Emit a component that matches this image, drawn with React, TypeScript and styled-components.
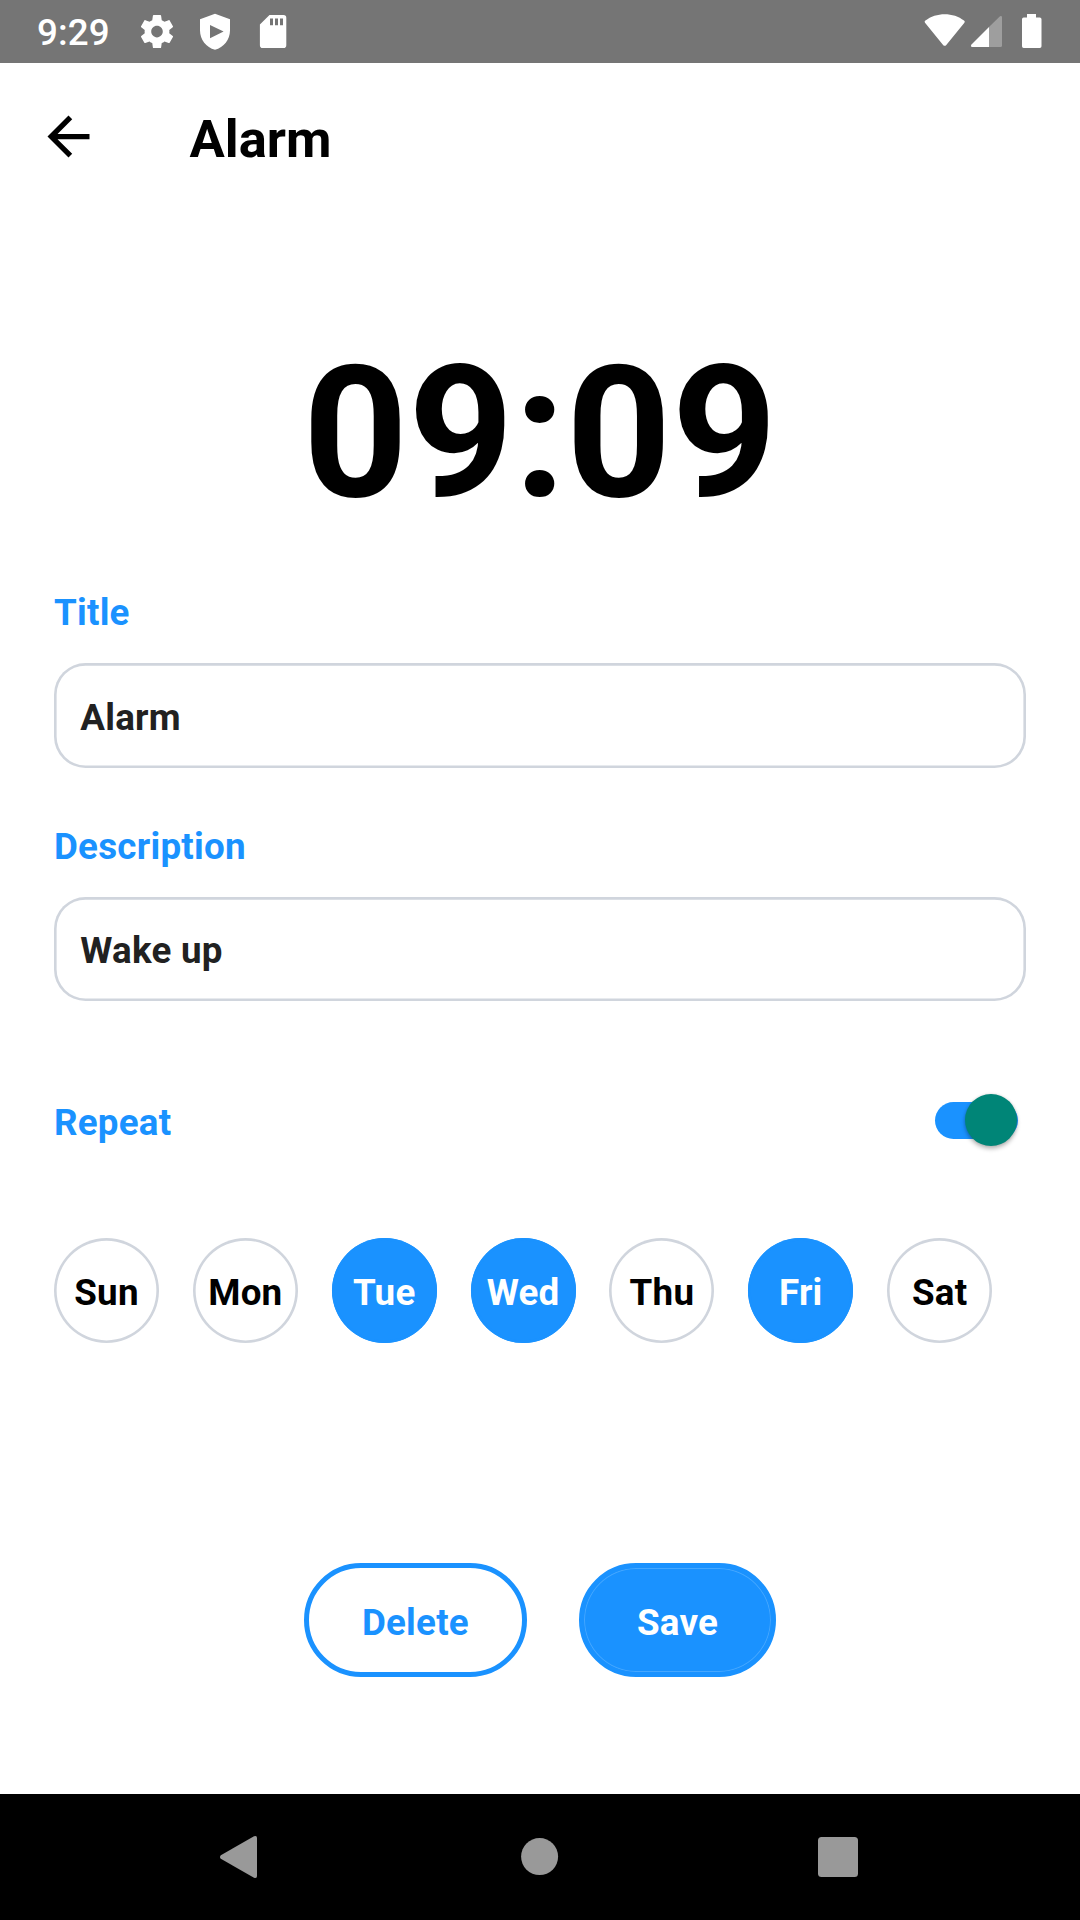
import React, { useState } from "react";
import styled, { createGlobalStyle } from "styled-components";

const BLUE = "#1a92ff";
const OUTLINE = "#d0d5dd";

const GlobalStyle = createGlobalStyle`
  *, *::before, *::after { box-sizing: border-box; }
  body { margin: 0; background: #fff; }
  button, input { font: inherit; letter-spacing: inherit; margin: 0; padding: 0; }
`;

const Screen = styled.div`
  width: 1080px;
  height: 1920px;
  display: flex;
  flex-direction: column;
  background: #fff;
  color: #000;
  overflow: hidden;
  font-family: Roboto, "Liberation Sans", sans-serif;
  font-size: 36.75px;
  font-weight: 700;
  line-height: 43px;
  letter-spacing: 0.24px;
`;

const StatusBar = styled.header`
  flex: none;
  height: 63px;
  display: flex;
  justify-content: space-between;
  background: #757575;
  color: #fff;
`;

const StatusSide = styled.div<{ $start?: number }>`
  display: flex;
  align-items: center;
  padding-left: ${(p) => p.$start ?? 0}px;
`;

const Clock = styled.span`
  width: 104px;
  padding-top: 2px;
  font-weight: 500;
  letter-spacing: 0.1px;
`;

const Glyph = styled.svg`
  display: block;
  flex: none;
`;

const AppBar = styled.div`
  flex: none;
  height: 147px;
  display: flex;
  align-items: center;
  padding-left: 36.5px;
`;

const BackButton = styled.button`
  width: 63px;
  height: 63px;
  border: 0;
  background: none;
`;

const PageTitle = styled.h1`
  margin: 4px 0 0 90px;
  font-size: 52.5px;
  line-height: 62px;
  letter-spacing: 0;
`;

const Content = styled.main`
  flex: 1;
  display: flex;
  flex-direction: column;
  padding: 0 54px;
`;

const Time = styled.div`
  margin-top: 116px;
  text-align: center;
  font-size: 183.75px;
  line-height: 216px;
`;

const Field = styled.label<{ $top: number }>`
  display: flex;
  flex-direction: column;
  gap: 29px;
  margin-top: ${(p) => p.$top}px;
`;

const Label = styled.span`
  color: ${BLUE};
`;

const TextInput = styled.input<{ $height: number }>`
  width: 100%;
  height: ${(p) => p.$height}px;
  padding: 3px 26.25px 0;
  border: 0;
  border-radius: 31.5px;
  box-shadow: inset 0 0 0 2.625px ${OUTLINE};
  background: #fff;
  color: #212121;
  outline: none;
`;

const RepeatRow = styled.div`
  display: flex;
  align-items: center;
  justify-content: space-between;
  height: 72px;
  margin-top: 85px;
  padding-right: 9px;
`;

const Toggle = styled.button`
  display: flex;
  align-items: center;
  width: 82.5px;
  height: 37px;
  margin-bottom: 4px;
  border: 0;
  background: none;
`;

const Track = styled.span<{ $on: boolean }>`
  flex: 1;
  height: 37px;
  margin-right: -23px;
  border-radius: 18.5px;
  background: ${(p) => (p.$on ? BLUE : OUTLINE)};
`;

const Thumb = styled.span`
  flex: none;
  width: 52.5px;
  height: 52.5px;
  margin-left: -30px;
  border-radius: 50%;
  background: #008577;
  box-shadow: 0 3px 4px rgba(0, 0, 0, 0.26), 0 0 3px rgba(0, 0, 0, 0.14);
`;

const Days = styled.div`
  display: grid;
  grid-template-columns: repeat(7, 1fr);
  margin-top: 80px;
`;

const Day = styled.button<{ $selected: boolean }>`
  width: 105px;
  height: 105px;
  padding-top: 3px;
  border: 0;
  border-radius: 50%;
  box-shadow: inset 0 0 0 2.625px ${(p) => (p.$selected ? BLUE : OUTLINE)};
  background: ${(p) => (p.$selected ? BLUE : "#fff")};
  color: ${(p) => (p.$selected ? "#fff" : "#000")};
`;

const Actions = styled.div`
  display: flex;
  justify-content: center;
  gap: 52px;
  margin-top: 220px;
`;

const ActionButton = styled.button<{ $filled?: boolean }>`
  height: 114px;
  padding: 5px 53px 0;
  border: 5px solid ${BLUE};
  border-radius: 57px;
  background: ${(p) => (p.$filled ? BLUE : "#fff")};
  color: ${(p) => (p.$filled ? "#fff" : BLUE)};
  ${(p) => p.$filled && "box-shadow: inset 0 0 0 1px #45a7ff;"}
`;

const NavBar = styled.nav`
  flex: none;
  height: 126px;
  display: flex;
  align-items: center;
  justify-content: space-between;
  padding: 0 221px 0 219px;
  background: #000;
`;

const DAY_NAMES = ["Sun", "Mon", "Tue", "Wed", "Thu", "Fri", "Sat"];

export default function App() {
  const [title, setTitle] = useState("Alarm");
  const [description, setDescription] = useState("Wake up");
  const [repeat, setRepeat] = useState(true);
  const [days, setDays] = useState(["Tue", "Wed", "Fri"]);

  const toggleDay = (day: string) =>
    setDays((d) => (d.includes(day) ? d.filter((x) => x !== day) : [...d, day]));

  return (
    <Screen>
      <GlobalStyle />
      <StatusBar>
        <StatusSide $start={37}>
          <Clock>9:29</Clock>
          <Glyph width="146" height="63" viewBox="141 0 146 63" fill="#fff">
            <path
              transform="translate(137.2 11.8) scale(1.65)"
              d="M19.43 12.98c.04-.32.07-.64.07-.98s-.03-.66-.07-.98l2.11-1.65c.19-.15.24-.42.12-.64l-2-3.46c-.12-.22-.39-.3-.61-.22l-2.49 1c-.52-.4-1.08-.73-1.69-.98l-.38-2.65C14.46 2.18 14.25 2 14 2h-4c-.25 0-.46.18-.49.42l-.38 2.65c-.61.25-1.17.59-1.69.98l-2.49-1c-.23-.09-.49 0-.61.22l-2 3.46c-.13.22-.07.49.12.64l2.11 1.65c-.04.32-.07.65-.07.98s.03.66.07.98l-2.11 1.65c-.19.15-.24.42-.12.64l2 3.46c.12.22.39.3.61.22l2.49-1c.52.4 1.08.73 1.69.98l.38 2.65c.03.24.24.42.49.42h4c.25 0 .46-.18.49-.42l.38-2.65c.61-.25 1.17-.59 1.69-.98l2.49 1c.23.09.49 0 .61-.22l2-3.46c.12-.22.07-.49-.12-.64l-2.11-1.65zM12 15.5c-1.93 0-3.5-1.57-3.5-3.5s1.57-3.5 3.5-3.5 3.5 1.57 3.5 3.5-1.57 3.5-3.5 3.5z"
            />
            <path
              fillRule="evenodd"
              d="M215 13.7L230 19.3V30.5C230 39.5 223.8 47.5 215 49.8C206.2 47.5 200 39.5 200 30.5V19.3ZM210 25V38.3L223.6 31.6Z"
            />
            <path
              fillRule="evenodd"
              d="M269.5 15H283.5Q286.3 15 286.3 17.8V45.2Q286.3 48 283.5 48H262.7Q259.9 48 259.9 45.2V24.6ZM270 18.5V25.2H273V18.5ZM275 18.5V25.2H278V18.5ZM280 18.5V25.2H283V18.5Z"
            />
          </Glyph>
        </StatusSide>
        <StatusSide>
          <Glyph width="160" height="63" viewBox="920 0 160 63" fill="#fff">
            <path d="M925 22.8Q924 21.6 925.4 20.5C936 12 953.5 12 964 20.5Q965.4 21.6 964.4 22.8L946.3 45Q944.7 46.7 943.1 45Z" />
            <path d="M989 27V47H972.3Q970 46.6 971.5 44.5Z" />
            <path fillOpacity=".3" d="M989 27L1000 16.2Q1001.9 15.4 1002 17.2V45.5Q1002 47 1000.5 47H989Z" />
            <path d="M1027 14H1036V17.5H1039.8Q1041.5 17.5 1041.5 19.2V46.2Q1041.5 47.9 1039.8 47.9H1023.7Q1022 47.9 1022 46.2V19.2Q1022 17.5 1023.7 17.5H1027Z" />
          </Glyph>
        </StatusSide>
      </StatusBar>

      <AppBar>
        <BackButton aria-label="Back">
          <Glyph width="63" height="63" viewBox="0 0 24 24">
            <path d="M20 11H7.83l5.59-5.59L12 4l-8 8 8 8 1.41-1.41L7.83 13H20v-2z" />
          </Glyph>
        </BackButton>
        <PageTitle>Alarm</PageTitle>
      </AppBar>

      <Content>
        <Time>09:09</Time>
        <Field $top={49}>
          <Label>Title</Label>
          <TextInput $height={105} value={title} onChange={(e) => setTitle(e.target.value)} />
        </Field>
        <Field $top={57}>
          <Label>Description</Label>
          <TextInput $height={104} value={description} onChange={(e) => setDescription(e.target.value)} />
        </Field>
        <RepeatRow>
          <Label>Repeat</Label>
          <Toggle role="switch" aria-checked={repeat} onClick={() => setRepeat(!repeat)}>
            <Track $on={repeat} />
            <Thumb />
          </Toggle>
        </RepeatRow>
        <Days>
          {DAY_NAMES.map((day) => (
            <Day key={day} $selected={days.includes(day)} onClick={() => toggleDay(day)}>
              {day}
            </Day>
          ))}
        </Days>
        <Actions>
          <ActionButton>Delete</ActionButton>
          <ActionButton $filled>Save</ActionButton>
        </Actions>
      </Content>

      <NavBar>
        <Glyph width="43" height="44" viewBox="0 0 43 44" fill="#999">
          <path d="M1.8 20.2L35 1.3Q38 .2 38 3V41Q38 43.8 35 42.7L1.8 23.8Q.2 22 1.8 20.2Z" />
        </Glyph>
        <Glyph width="38" height="38" viewBox="0 0 38 38" fill="#999">
          <circle cx="18.6" cy="18.6" r="18.5" />
        </Glyph>
        <Glyph width="42" height="42" viewBox="0 0 42 42" fill="#999">
          <rect x="1" y="1" width="40" height="40" rx="3.5" />
        </Glyph>
      </NavBar>
    </Screen>
  );
}
